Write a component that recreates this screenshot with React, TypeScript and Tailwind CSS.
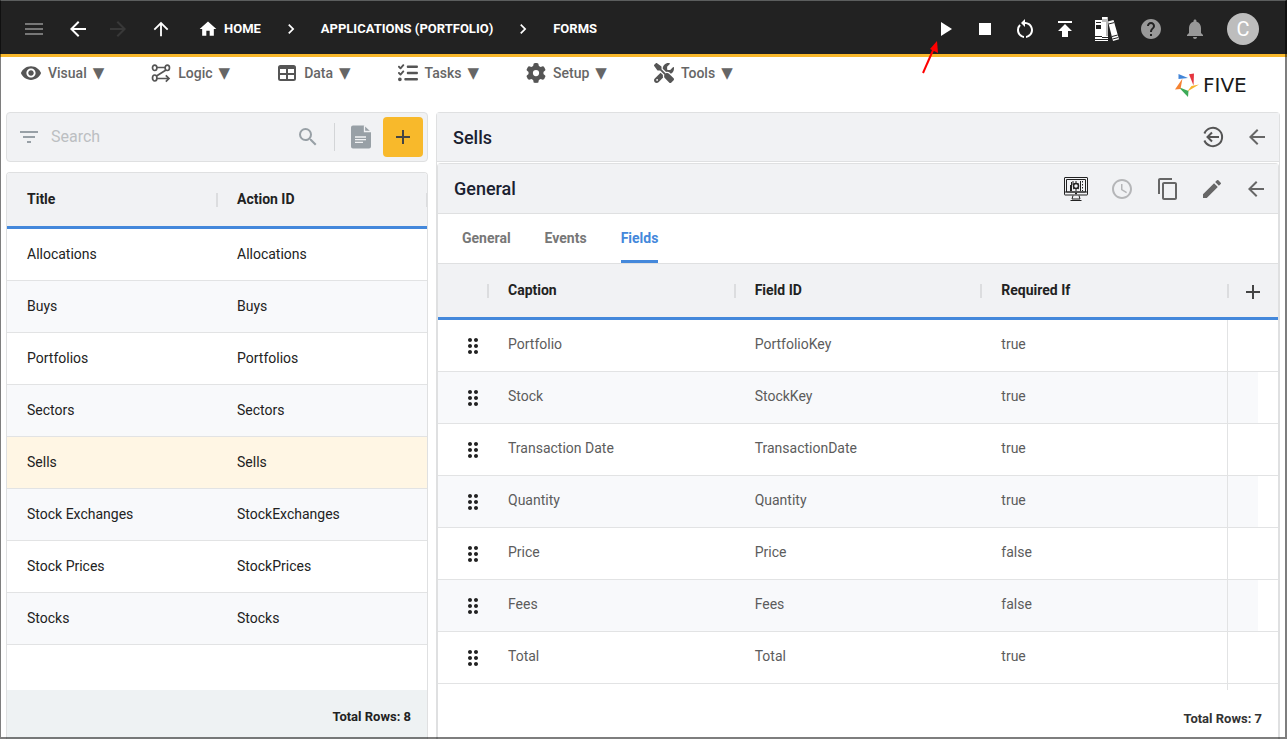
import React, { useState } from 'react';
import {
    MdAccessTime,
    MdAdd,
    MdArrowBack,
    MdArrowForward,
    MdArrowUpward,
    MdChevronRight,
    MdContentCopy,
    MdDragIndicator,
    MdEdit,
    MdFilterList,
    MdHelp,
    MdHome,
    MdMenu,
    MdNotifications,
    MdPlayArrow,
    MdPublish,
    MdRestartAlt,
    MdSearch,
    MdStop,
    MdVisibility,
} from 'react-icons/md';
import { FaGear, FaListCheck, FaScrewdriverWrench } from 'react-icons/fa6';

interface ActionRow {
    title: string;
    actionId: string;
}

interface FieldRow {
    caption: string;
    fieldId: string;
    requiredIf: string;
}

const ACTIONS: ActionRow[] = [
    { title: 'Allocations', actionId: 'Allocations' },
    { title: 'Buys', actionId: 'Buys' },
    { title: 'Portfolios', actionId: 'Portfolios' },
    { title: 'Sectors', actionId: 'Sectors' },
    { title: 'Sells', actionId: 'Sells' },
    { title: 'Stock Exchanges', actionId: 'StockExchanges' },
    { title: 'Stock Prices', actionId: 'StockPrices' },
    { title: 'Stocks', actionId: 'Stocks' },
];

const FIELDS: FieldRow[] = [
    { caption: 'Portfolio', fieldId: 'PortfolioKey', requiredIf: 'true' },
    { caption: 'Stock', fieldId: 'StockKey', requiredIf: 'true' },
    { caption: 'Transaction Date', fieldId: 'TransactionDate', requiredIf: 'true' },
    { caption: 'Quantity', fieldId: 'Quantity', requiredIf: 'true' },
    { caption: 'Price', fieldId: 'Price', requiredIf: 'false' },
    { caption: 'Fees', fieldId: 'Fees', requiredIf: 'false' },
    { caption: 'Total', fieldId: 'Total', requiredIf: 'true' },
];

const TABS = ['General', 'Events', 'Fields'];

const LogicIcon = () => (
    <svg className="w-5 h-5" viewBox="0 0 20 20" fill="none" stroke="currentColor" strokeWidth={1.7}>
        <ellipse cx="3.7" cy="4.8" rx="2.2" ry="2.7" />
        <ellipse cx="16.3" cy="4.8" rx="2.2" ry="2.7" />
        <ellipse cx="3.7" cy="15" rx="2.2" ry="3" />
        <path d="M6 4.500h8M15 7 5.500 13M6 15.500h12M14.800 12.300l3.200 3.200-3.200 3.200" />
    </svg>
);

const DataIcon = () => (
    <svg className="w-5 h-5" viewBox="0 0 20 20">
        <path
            fill="currentColor"
            fillRule="evenodd"
            d="M3.500 2h13A2.500 2.500 0 0 1 19 4.500v11a2.500 2.500 0 0 1-2.500 2.500h-13A2.500 2.500 0 0 1 1 15.500v-11A2.500 2.500 0 0 1 3.500 2zM3 6v4h6V6zM11 6v4h6V6zM3 12v4h6v-4zM11 12v4h6v-4z"
        />
    </svg>
);

const BooksIcon = () => (
    <svg className="w-6 h-6" viewBox="0 0 24 24">
        <path fill="#fff" d="M0 3h7v21H0z" />
        <path fill="#222" d="M1 5h5v1H1zM1 8h5v4H1zM0 19h7v1H0zM0 22h7v1H0z" />
        <path fill="#bbb" d="M7 0h6v24H7z" />
        <path fill="#fff" d="M7 0h5v2H7zM7 5h4v14H7zM7 19h6v5H7z" />
        <path fill="#222" d="M7 20h6v1H7zM7 22h6v1H7z" />
        <path fill="#fff" d="m13 4.500 5.500-1.500L24 22.300 18 24z" />
        <path stroke="#222" strokeWidth="1" fill="none" d="m13.600 7 5.500-1.400M17 19.500l5.700-1.500M17.600 22l5.700-1.500" />
    </svg>
);

const DocumentIcon = () => (
    <svg className="w-6 h-6" viewBox="0 0 24 24">
        <path fill="currentColor" d="M4 .5h11L22 7v14.500a2 2 0 0 1-2 2H4a2 2 0 0 1-2-2v-19a2 2 0 0 1 2-2z" />
        <path fill="none" stroke="#f1f2f4" strokeWidth="1.300" d="M15.500.5V6.500H22M6 12h11M6 14.700h11M6 17.400h8" />
    </svg>
);

const ExitIcon = () => (
    <svg className="w-6 h-6" viewBox="0 0 24 24" fill="none" stroke="currentColor" strokeWidth={2}>
        <path d="M3.400 8.500A9.200 9.200 0 1 1 3.400 15.500" />
        <path d="M18 12H6.500M11 7.500 6.500 12l4.500 4.500" />
    </svg>
);

const MonitorIcon = () => (
    <svg className="w-6 h-6" viewBox="0 0 24 24" fill="none" stroke="#222" strokeWidth={1}>
        <rect x="0.500" y="0.500" width="23" height="17.500" rx="0.500" />
        <path d="M2.500 2.500h19v12.500h-19zM1 15h22M9 18.500 8 22h8l-1-3.500M6.500 23.500h11" />
        <path d="M7.500 5v9M6.500 8v6M9 4v4M16.500 4v10M18.500 4v1.500M18.500 7v1.500M18.500 10v1.500M18.500 13v1" />
        <circle cx="12" cy="9" r="2.500" strokeWidth={1.500} />
        <path d="M12 4v2M12 11v3M9.500 6l1 1M14.500 6l-1 1M9 12l1.500-1M15 12l-1.500-1" />
        <path d="M11 16.500h2" strokeWidth={1.500} />
    </svg>
);

const FiveLogo = () => (
    <div className="flex items-center gap-1" aria-label="Five">
        <svg className="w-6 h-6" viewBox="0 0 24 24">
            <path fill="#4285d8" d="M3.500 1 13 5 3.500 6z" />
            <path fill="#e5353f" d="M14 1.300 19 .5 18.500 12.500z" />
            <path fill="#f7b52c" d="M24 11.500 12 18.800 16.500 13z" />
            <path fill="#3daa57" d="m3.500 14 10 4-.500 6z" />
            <path fill="#f58232" d="M7.500 5.500 5.500 16 0 16.500z" />
        </svg>
        <span className="w-[60px] font-['DejaVu_Sans'] text-[20px] leading-6 text-[#1a1a1a]">FIVE</span>
    </div>
);

const MENUS = [
    { label: 'Visual', icon: <MdVisibility className="w-[22px] h-[22px] -mx-px" /> },
    { label: 'Logic', icon: <LogicIcon /> },
    { label: 'Data', icon: <DataIcon /> },
    { label: 'Tasks', icon: <FaListCheck className="w-5 h-5" /> },
    { label: 'Setup', icon: <FaGear className="w-5 h-5" /> },
    { label: 'Tools', icon: <FaScrewdriverWrench className="w-5 h-5" /> },
];

interface IconButtonProps {
    label: string;
    className?: string;
    children: React.ReactNode;
}

const IconButton: React.FC<IconButtonProps> = ({ label, className = '', children }) => (
    <button type="button" aria-label={label} className={`flex shrink-0 cursor-pointer ${className}`}>
        {children}
    </button>
);

/** Column heading with the resize grip on its right edge */
const HeaderCell: React.FC<{ children?: React.ReactNode }> = ({ children }) => (
    <th className="relative h-14 border-b-[3px] border-[#4488db] px-5 text-left font-bold text-[#222]">
        {children}
        <span className="absolute -right-px top-5 h-3.5 w-0.5 bg-[#dcdddf]" />
    </th>
);

const TopBar = () => (
    <header className="flex h-[57px] items-center justify-between border-b-[3px] border-[#f9b82b] bg-[#222] pl-[22px] pr-7 pt-1 text-white">
        <nav className="flex items-center text-[13px] font-bold">
            <IconButton label="Menu" className="text-[#777]">
                <MdMenu className="w-6 h-6" />
            </IconButton>
            <IconButton label="Back" className="ml-5">
                <MdArrowBack className="w-6 h-6" />
            </IconButton>
            <IconButton label="Forward" className="ml-4 text-[#383838]">
                <MdArrowForward className="w-6 h-6" />
            </IconButton>
            <IconButton label="Up" className="ml-5">
                <MdArrowUpward className="w-[22px] h-[22px]" />
            </IconButton>
            <a href="#home" className="ml-[26px] flex items-center gap-1.5">
                <MdHome className="w-5 h-5" />
                HOME
            </a>
            <MdChevronRight className="mx-5 w-5 h-5" />
            <a href="#applications">APPLICATIONS (PORTFOLIO)</a>
            <MdChevronRight className="mx-5 w-5 h-5" />
            <a href="#forms">FORMS</a>
        </nav>
        <div className="flex items-center gap-5">
            <div className="flex items-center gap-4">
                <div className="relative">
                    <IconButton label="Run">
                        <MdPlayArrow className="w-6 h-6" />
                    </IconButton>
                    <svg className="absolute -left-3 top-6 w-5 h-9" viewBox="0 0 20 36">
                        <path d="M2 32 13 7" stroke="#f00" strokeWidth="2" />
                        <path d="M16 0 17 12 9 8z" fill="#f00" />
                    </svg>
                </div>
                <IconButton label="Stop">
                    <MdStop className="w-6 h-6" />
                </IconButton>
                <IconButton label="Restart">
                    <MdRestartAlt className="w-6 h-6" />
                </IconButton>
                <IconButton label="Deploy">
                    <MdPublish className="w-6 h-6" />
                </IconButton>
                <IconButton label="Library" className="pl-0.5">
                    <BooksIcon />
                </IconButton>
            </div>
            <IconButton label="Help" className="text-[#999]">
                <MdHelp className="w-6 h-6" />
            </IconButton>
            <IconButton label="Notifications" className="text-[#999]">
                <MdNotifications className="w-6 h-6" />
            </IconButton>
            <button type="button" className="h-8 w-8 rounded-full bg-[#bdbdbd] text-[20px] leading-8">
                C
            </button>
        </div>
    </header>
);

const MenuBar = () => (
    <div className="flex h-[55px] items-start justify-between pl-[21px] pr-6 text-[#555]">
        <nav className="flex gap-[47px] pt-1">
            {MENUS.map((menu) => (
                <button
                    key={menu.label}
                    type="button"
                    className="flex h-6 items-center gap-[7px] text-[14px] font-medium text-[#555]"
                >
                    {menu.icon}
                    <span className="flex items-center gap-1.5 text-[#666]">
                        {menu.label}
                        <span className="font-['DejaVu_Sans'] text-[15px]">▼</span>
                    </span>
                </button>
            ))}
        </nav>
        <div className="self-center">
            <FiveLogo />
        </div>
    </div>
);

const ActionList = () => {
    const [selected, setSelected] = useState('Sells');

    return (
        <section className="flex min-w-0 flex-col gap-2.5">
            <div className="flex h-[50px] items-center rounded border border-[#dfe0e1] bg-[#f1f2f4] pl-2.5 pr-1 text-[#98a0a6]">
                <MdFilterList className="w-6 h-6 shrink-0" />
                <input
                    type="text"
                    aria-label="Search"
                    placeholder="Search"
                    className="ml-2.5 min-w-0 flex-1 bg-transparent text-[16px] text-[#333] outline-none placeholder:text-[#bcbfc2]"
                />
                <IconButton label="Search">
                    <MdSearch className="w-6 h-6" />
                </IconButton>
                <span className="ml-3.5 h-7 w-px bg-[#d3d5d7]" />
                <IconButton label="Notes" className="ml-3.5">
                    <DocumentIcon />
                </IconButton>
                <button
                    type="button"
                    aria-label="Add action"
                    className="ml-2.5 flex h-10 w-10 items-center justify-center rounded bg-[#f8b92b] text-[#444]"
                >
                    <MdAdd className="w-6 h-6" />
                </button>
            </div>

            <div className="flex flex-1 flex-col overflow-hidden rounded-t border-x border-t border-[#dfe0e1]">
                <table className="w-full table-fixed border-separate border-spacing-0 text-[14px] text-[#222]">
                    <thead className="bg-[#f1f2f4]">
                        <tr>
                            <HeaderCell>Title</HeaderCell>
                            <HeaderCell>Action ID</HeaderCell>
                        </tr>
                    </thead>
                    <tbody>
                        {ACTIONS.map((row) => (
                            <tr
                                key={row.title}
                                onClick={() => setSelected(row.title)}
                                className={row.title === selected ? 'bg-[#fff6e4]' : 'even:bg-[#f8f9fb]'}
                            >
                                <td className="h-[52px] border-b border-[#e2e3e4] px-5">{row.title}</td>
                                <td className="h-[52px] border-b border-[#e2e3e4] px-5">{row.actionId}</td>
                            </tr>
                        ))}
                    </tbody>
                </table>
                <div className="mt-auto flex h-[49px] items-center justify-end bg-[#eef2f3] pr-4 pt-1 text-[13px] font-bold text-[#222]">
                    Total Rows: {ACTIONS.length}
                </div>
            </div>
        </section>
    );
};

const FieldsTable = () => (
    <>
        <table className="w-full table-fixed border-separate border-spacing-0 text-[14px] text-[#5c5c5c]">
            <colgroup>
                <col className="w-[50px]" />
                <col />
                <col />
                <col />
                <col className="w-[50px]" />
            </colgroup>
            <thead className="bg-[#f1f2f4]">
                <tr>
                    <HeaderCell />
                    <HeaderCell>Caption</HeaderCell>
                    <HeaderCell>Field ID</HeaderCell>
                    <HeaderCell>Required If</HeaderCell>
                    <th className="border-b-[3px] border-[#4488db] pl-[13px] pt-0.5 text-[#444]">
                        <IconButton label="Add field">
                            <MdAdd className="w-6 h-6" />
                        </IconButton>
                    </th>
                </tr>
            </thead>
            <tbody>
                {FIELDS.map((row) => (
                    <tr key={row.caption} className="group">
                        <td className="h-[52px] border-b border-[#e2e3e4] pl-[23px] text-[#222] group-even:bg-[#f8f9fb]">
                            <MdDragIndicator className="w-6 h-6" />
                        </td>
                        <td className="border-b border-[#e2e3e4] px-5 pb-0.5 group-even:bg-[#f8f9fb]">{row.caption}</td>
                        <td className="border-b border-[#e2e3e4] px-5 pb-0.5 group-even:bg-[#f8f9fb]">{row.fieldId}</td>
                        <td className="border-b border-r border-[#e2e3e4] px-5 pb-0.5 group-even:bg-[#f8f9fb]">
                            {row.requiredIf}
                        </td>
                        <td className="border-b border-[#e2e3e4] p-0">
                            <div className="h-[51px] w-[30px] group-even:bg-[#f8f9fb]" />
                        </td>
                    </tr>
                ))}
            </tbody>
        </table>
        <div className="mr-[50px] flex-1 border-r border-[#e2e3e4]" />
        <div className="flex h-[49px] items-center justify-end pr-4 pt-2 text-[13px] font-bold text-[#333]">
            Total Rows: {FIELDS.length}
        </div>
    </>
);

const FormDetail = () => {
    const [tab, setTab] = useState('Fields');

    return (
        <section className="flex min-w-0 flex-col rounded-t border-x border-t border-[#dfe0e1]">
            <div className="flex h-[49px] items-center justify-between border-b border-[#dfe0e1] bg-[#f1f2f4] pl-4 pr-2.5 text-[#555]">
                <h1 className="text-[18px] font-medium text-[#1a2130]">Sells</h1>
                <div className="flex items-center gap-5">
                    <IconButton label="Exit">
                        <ExitIcon />
                    </IconButton>
                    <IconButton label="Back" className="text-[#666]">
                        <MdArrowBack className="w-6 h-6" />
                    </IconButton>
                </div>
            </div>

            <div className="mt-px flex flex-1 flex-col rounded-t border-x border-t border-[#dfe0e1]">
                <div className="flex h-[50px] items-center justify-between border-b border-[#dfe0e1] bg-[#f1f2f4] pl-4 pr-2.5 text-[#666]">
                    <h2 className="text-[18px] font-medium text-[#1a2130]">General</h2>
                    <div className="flex items-center gap-5">
                        <div className="flex items-center gap-[22px]">
                            <IconButton label="Preview">
                                <MonitorIcon />
                            </IconButton>
                            <IconButton label="History" className="text-[#b5b6b8]">
                                <MdAccessTime className="w-6 h-6" />
                            </IconButton>
                            <IconButton label="Copy">
                                <MdContentCopy className="w-6 h-6" />
                            </IconButton>
                        </div>
                        <IconButton label="Edit">
                            <MdEdit className="w-6 h-6" />
                        </IconButton>
                        <IconButton label="Back">
                            <MdArrowBack className="w-6 h-6" />
                        </IconButton>
                    </div>
                </div>

                <div role="tablist" className="flex h-[50px] gap-[34px] border-b border-[#dfe0e1] pl-6">
                    {TABS.map((name) => (
                        <button
                            key={name}
                            type="button"
                            role="tab"
                            aria-selected={name === tab}
                            onClick={() => setTab(name)}
                            className={
                                name === tab
                                    ? 'border-b-[3px] border-[#4488db] pt-[3px] text-[14px] font-bold text-[#4488db]'
                                    : 'border-b-[3px] border-transparent pt-[3px] text-[14px] font-bold text-[#777]'
                            }
                        >
                            {name}
                        </button>
                    ))}
                </div>

                <FieldsTable />
            </div>
        </section>
    );
};

const App: React.FC = () => (
    <div className="relative flex min-h-screen flex-col bg-white font-[Roboto,sans-serif]">
        <TopBar />
        <MenuBar />
        <main className="grid flex-1 grid-cols-[1fr_2fr] gap-2 pl-1.5 pr-[7px]">
            <ActionList />
            <FormDetail />
        </main>
        {/* window frame */}
        <div className="pointer-events-none absolute inset-0 border-b-2 border-l border-r-2 border-t border-black/50 border-t-[#5c5e5e]" />
    </div>
);

export default App;
